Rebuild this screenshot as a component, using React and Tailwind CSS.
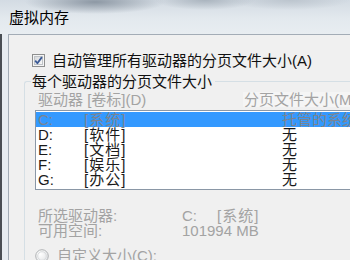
import React from 'react'

const drives = [
  { letter: 'C:', label: '[系统]', size: '托管的系统', selected: true },
  { letter: 'D:', label: '[软件]', size: '无' },
  { letter: 'E:', label: '[文档]', size: '无' },
  { letter: 'F:', label: '[娱乐]', size: '无' },
  { letter: 'G:', label: '[办公]', size: '无' },
]

const CheckBox = () => (
  <svg width="13" height="13" viewBox="0 0 13 13" className="shrink-0">
    <defs>
      <linearGradient id="cbfill" x1="0" y1="0" x2="1" y2="1">
        <stop offset="0" stopColor="#d4d6d9" />
        <stop offset="1" stopColor="#fafafa" />
      </linearGradient>
    </defs>
    <rect x="0.5" y="0.5" width="12" height="12" fill="#f4f4f4" stroke="#8e8f8f" />
    <rect x="2.5" y="2.5" width="8" height="8" fill="url(#cbfill)" stroke="#bfc3c7" />
    <path d="M3.2 6.6 L5.4 9.3 L9.9 3.1" stroke="#3b5a96" strokeWidth="1.8" fill="none" strokeLinejoin="round" />
  </svg>
)

const Radio = () => (
  <svg width="14" height="14" viewBox="0 0 14 14" className="shrink-0">
    <defs>
      <radialGradient id="rdfill" cx="0.35" cy="0.35" r="0.7">
        <stop offset="0" stopColor="#ffffff" />
        <stop offset="1" stopColor="#e2e4e6" />
      </radialGradient>
    </defs>
    <circle cx="7" cy="7" r="6.3" fill="url(#rdfill)" stroke="#b1b3b5" />
    <circle cx="7" cy="7" r="4.3" fill="none" stroke="#d9dbdd" />
  </svg>
)

export default function App() {
  return (
    <div className="w-[350px] h-[260px] overflow-hidden flex flex-col bg-[#e6ebf0] font-['Liberation_Sans','Noto_Sans_CJK_SC',sans-serif] text-[15px] leading-[15px] text-[#111]">
      {/* title bar */}
      <div className="h-[34px] shrink-0 flex items-center pl-[9px] text-black bg-[radial-gradient(70px_12px_at_95px_2px,#8d98a4,transparent),radial-gradient(50px_10px_at_205px_0px,#aab4be,transparent),radial-gradient(60px_10px_at_290px_0px,#bcc5ce,transparent),linear-gradient(#d3dbe3,#e3e9ee_55%,#e8edf1)]">
        虚拟内存
      </div>

      <div className="flex flex-1 min-h-0">
        {/* window frame */}
        <div className="w-[8px] shrink-0 flex">
          <div className="w-[2px] bg-[#4a4e54]" />
          <div className="flex-1 bg-[#e7ecf1]" />
        </div>

        {/* client area */}
        <div className="flex-1 bg-[#f0f0f0] border-l border-t border-[#a3acb6]">
          <div className="mt-[17px] h-[16px] pl-[23px] flex items-center gap-[7px] whitespace-nowrap">
            <CheckBox />
            <span>自动管理所有驱动器的分页文件大小(A)</span>
          </div>

          {/* group box */}
          <div className="mt-[5px] ml-[15px]">
            <div className="flex h-[16px] items-center whitespace-nowrap">
              <div className="w-[7px] self-stretch mt-[8px] border-l border-t border-[#d5dfe5] rounded-tl-[3px]" />
              <span className="pl-[1px] pr-[3px]">每个驱动器的分页文件大小</span>
              <div className="flex-1 self-stretch mt-[8px] border-t border-[#d5dfe5]" />
            </div>

            <div className="border-l border-[#d5dfe5] pt-[3px] pb-[20px]">
              <div className="h-[15px] pl-[13px] flex items-center whitespace-nowrap text-[#a3a3a3]">
                <span className="w-[205px] shrink-0">驱动器 [卷标](D)</span>
                <span className="bg-[#f5f5f5] pl-[1px]">分页文件大小(MB)</span>
              </div>

              <div className="mt-[3px] ml-[10px] w-[330px] bg-white border border-[#8a97a6] pt-[1px] pb-[2px]">
                {drives.map((d) => (
                  <div
                    key={d.letter}
                    className={`h-[15px] pl-[2px] flex items-center whitespace-nowrap ${
                      d.selected ? 'bg-[#3399ff] text-[#7b8490]' : 'text-[#1a1a1a]'
                    }`}
                  >
                    <span className="w-[46px] shrink-0">{d.letter}</span>
                    <span className="w-[198px] shrink-0 tracking-[1px]">{d.label}</span>
                    <span>{d.size}</span>
                  </div>
                ))}
              </div>

              <div className="mt-[18px] pl-[13px] text-[#a3a3a3] whitespace-nowrap">
                <div className="h-[15px] flex items-center">
                  <span className="w-[144px] shrink-0">所选驱动器:</span>
                  <span className="w-[35px] shrink-0">C:</span>
                  <span className="tracking-[1px]">[系统]</span>
                </div>
                <div className="h-[15px] flex items-center">
                  <span className="w-[144px] shrink-0">可用空间:</span>
                  <span>101994 MB</span>
                </div>
              </div>

              <div className="mt-[10px] h-[15px] pl-[10px] flex items-center gap-[8px] whitespace-nowrap text-[#a3a3a3]">
                <Radio />
                <span>自定义大小(C):</span>
              </div>
            </div>
          </div>
        </div>
      </div>
    </div>
  )
}
